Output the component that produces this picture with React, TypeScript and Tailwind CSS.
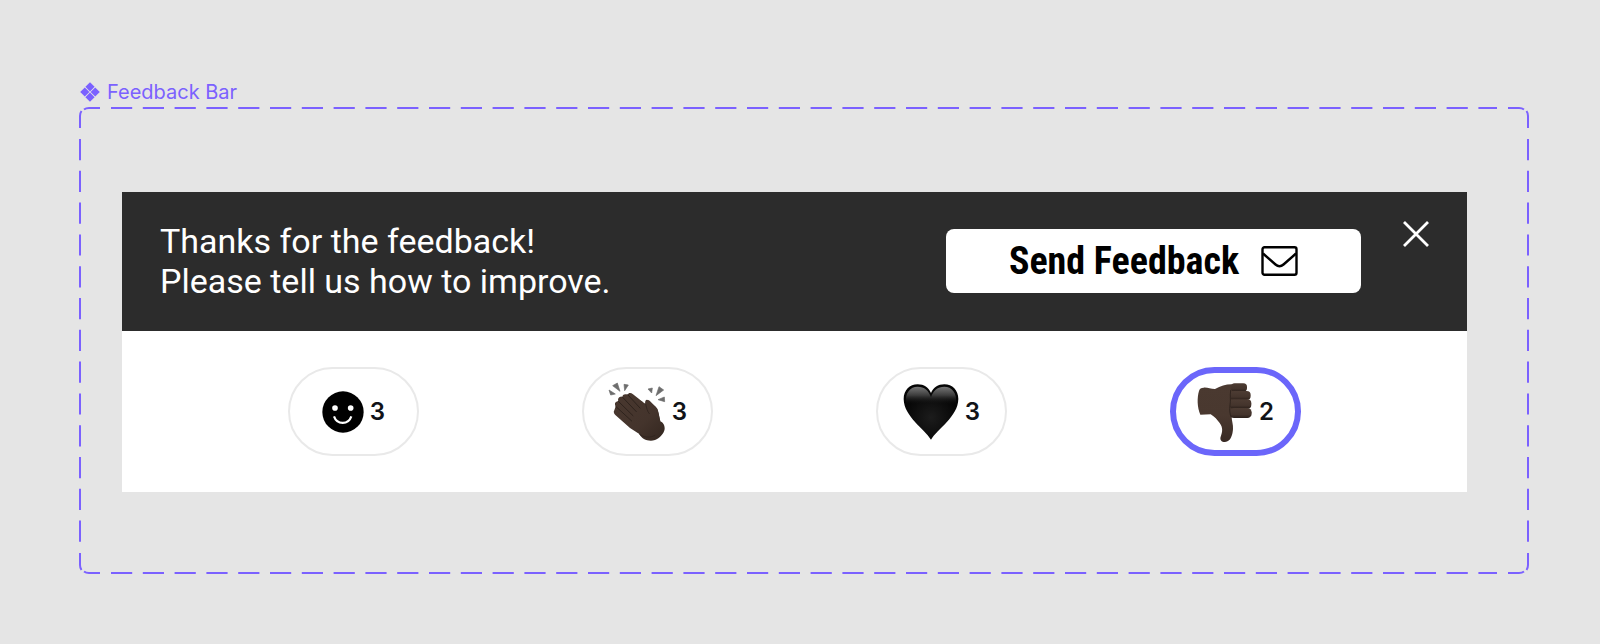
import { useState } from "react";
import type { ReactNode } from "react";

type Reaction = {
  id: string;
  label: string;
  count: number;
  icon: ReactNode;
};

function ComponentIcon() {
  return (
    <svg width="20" height="20" viewBox="0 0 20 20" fill="currentColor" aria-hidden="true">
      <path d="M10 .2 14.6 4.8 10 9.4 5.4 4.8ZM4.8 5.4 9.4 10 4.8 14.6.2 10ZM15.2 5.4 19.8 10 15.2 14.6 10.6 10ZM10 10.6 14.6 15.2 10 19.8 5.4 15.2Z" />
    </svg>
  );
}

function MailIcon() {
  return (
    <svg width="37" height="30" viewBox="0 0 37 30" fill="none" stroke="currentColor" strokeWidth="2.4" aria-hidden="true">
      <rect x="1.5" y="1.2" width="34" height="27.6" rx="2" />
      <path d="M2 7.5 14.5 18.5Q18.5 22 22.5 18.5L35 7.5" />
    </svg>
  );
}

function CloseIcon() {
  return (
    <svg width="26" height="26" viewBox="0 0 26 26" fill="none" stroke="currentColor" strokeWidth="2.8" aria-hidden="true">
      <path d="M1 1 25 25M25 1 1 25" />
    </svg>
  );
}

function SmileIcon() {
  return (
    <svg width="42" height="42" viewBox="129 91 126 126" aria-hidden="true">
      <circle cx="192" cy="154" r="62" fill="#000" />
      <circle cx="168" cy="142" r="8.5" fill="#fff" />
      <circle cx="215" cy="142" r="8.5" fill="#fff" />
      <path d="M165 167C174 193 208 193 217 167" fill="none" stroke="#fff" strokeWidth="6.5" />
    </svg>
  );
}

function ClapIcon() {
  return (
    <svg width="58" height="60" viewBox="115 63 174 180" aria-hidden="true">
      <defs>
        <linearGradient id="clap-skin" x1="0" y1="0" x2="1" y2="1">
          <stop offset="0" stopColor="#49382f" />
          <stop offset="0.6" stopColor="#44342c" />
          <stop offset="1" stopColor="#33261f" />
        </linearGradient>
      </defs>
      <path d="M118 87 123 102 137 99ZM129 74 143 66 151 91ZM163 70 176 72 165 89ZM235 84 248 81 246 96ZM268 77 282 87 259 104ZM284 108 285 122 265 116Z" fill="#6d6d6d" stroke="#6d6d6d" strokeWidth="2" strokeLinejoin="round" />
      <path d="M206 123C210 117 216 119 220 125L227 129C225 118 231 113 237 119L258 137C268 147 268 166 272 181L240 190Z" fill="#3c2d27" />
      <path d="M134 148C131 151 132 157 137 162L181 201 209 219C216 235 238 243 256 237C270 232 283 218 285 204C286 192 279 184 272 181L263 143 240 119C232 113 226 120 228 130L190 100C183 94 176 96 174 101C164 97 158 102 158 108C149 106 143 112 146 121C137 121 133 128 138 136Z" fill="url(#clap-skin)" />
      <path d="M174 101 211 141M158 108 200 152M146 121 190 164M138 136 186 180" fill="none" stroke="#2a1f1a" strokeWidth="2.6" strokeLinecap="round" />
      <path d="M228 129C232 143 232 150 239 158M209 219C222 231 242 231 256 223" fill="none" stroke="#30241e" strokeWidth="2.6" strokeLinecap="round" />
    </svg>
  );
}

function HeartIcon() {
  return (
    <svg width="56" height="58" viewBox="102 69 168 174" aria-hidden="true">
      <defs>
        <linearGradient id="heart-shine" x1="0" y1="0" x2="0" y2="1">
          <stop offset="0" stopColor="#777" />
          <stop offset="0.5" stopColor="#3c3c3c" />
          <stop offset="1" stopColor="#111" stopOpacity="0" />
        </linearGradient>
        <radialGradient id="heart-body" cx="0.5" cy="0.6" r="0.5">
          <stop offset="0" stopColor="#1c1c1c" />
          <stop offset="1" stopColor="#050505" />
        </radialGradient>
      </defs>
      <path d="M186 239C167 207 105 170 104 117C104 91 122 73 146 73C165 73 179 82 186 99C193 82 207 73 226 73C250 73 268 91 268 117C267 170 205 207 186 239Z" fill="url(#heart-body)" />
      <path d="M111 132C107 98 124 80 146 80C166 80 180 92 186 112C192 92 206 80 226 80C248 80 265 98 261 132Z" fill="url(#heart-shine)" />
    </svg>
  );
}

function ThumbsDownIcon() {
  return (
    <svg width="56" height="60" viewBox="117 63 168 180" aria-hidden="true">
      <defs>
        <linearGradient id="thumb-skin" x1="0" y1="0" x2="0" y2="1">
          <stop offset="0" stopColor="#4a3930" />
          <stop offset="0.55" stopColor="#49382f" />
          <stop offset="1" stopColor="#382a24" />
        </linearGradient>
        <linearGradient id="finger-skin" x1="0" y1="0" x2="0" y2="1">
          <stop offset="0" stopColor="#4d3c33" />
          <stop offset="0.65" stopColor="#44342c" />
          <stop offset="1" stopColor="#2a1f1a" />
        </linearGradient>
      </defs>
      <path d="M137 80C149 79 157 84 171 84C189 75 205 69 225 70L240 90V160L221 169C221 179 226 191 225 204C224 220 219 242 201 243C190 243 185 236 188 227C194 212 195 199 185 186C178 177 170 167 158 160L127 161C117 138 117 110 123 90C125 83 129 80 137 80Z" fill="url(#thumb-skin)" />
      <rect x="219" y="67" width="48" height="25" rx="11" fill="url(#finger-skin)" />
      <rect x="216" y="90" width="62" height="27" rx="12" fill="url(#finger-skin)" />
      <rect x="215" y="115" width="65" height="28" rx="12" fill="url(#finger-skin)" />
      <rect x="215" y="141" width="66" height="30" rx="13" fill="url(#finger-skin)" />
      <path d="M218 88C215 105 219 116 216 132C214 147 215 160 220 168" fill="none" stroke="#30241e" strokeWidth="3" strokeLinecap="round" />
    </svg>
  );
}

const reactions: Reaction[] = [
  { id: "smile", label: "Smile", count: 3, icon: <SmileIcon /> },
  { id: "clap", label: "Clap", count: 3, icon: <ClapIcon /> },
  { id: "heart", label: "Love", count: 3, icon: <HeartIcon /> },
  { id: "down", label: "Thumbs down", count: 2, icon: <ThumbsDownIcon /> },
];

// Dashed outline: straight edges plus four rounded corners
function DashedOutline() {
  const edge = { stroke: "currentColor", strokeWidth: 2, strokeDasharray: "21.2 10.6" };
  const corner = (
    <path d="M1 21V9Q1 6 2.5 4M5 2.5Q7 1 10 1H21" fill="none" stroke="currentColor" strokeWidth="2" />
  );

  return (
    <div className="pointer-events-none absolute inset-0 text-[#7b61ff]" aria-hidden="true">
      <div className="absolute inset-x-8 inset-y-0 flex flex-col justify-between">
        <svg className="h-0.5 w-full"><line x1="0" y1="1" x2="100%" y2="1" {...edge} /></svg>
        <svg className="h-0.5 w-full"><line x1="0" y1="1" x2="100%" y2="1" {...edge} /></svg>
      </div>
      <div className="absolute inset-x-0 inset-y-8 flex justify-between">
        <svg className="h-full w-0.5"><line x1="1" y1="0" x2="1" y2="100%" {...edge} /></svg>
        <svg className="h-full w-0.5"><line x1="1" y1="0" x2="1" y2="100%" {...edge} /></svg>
      </div>
      <svg className="absolute left-0 top-0 size-[21px]">{corner}</svg>
      <svg className="absolute right-0 top-0 size-[21px] -scale-x-100">{corner}</svg>
      <svg className="absolute bottom-0 left-0 size-[21px] -scale-y-100">{corner}</svg>
      <svg className="absolute bottom-0 right-0 size-[21px] -scale-100">{corner}</svg>
    </div>
  );
}

function FeedbackBar() {
  const [selected, setSelected] = useState("down");
  const [open, setOpen] = useState(true);

  return (
    <section className="bg-white">
      {open && (
        <header className="flex items-start justify-between bg-[#2c2c2c] pb-[30px] pl-[38px] pr-[38px] pt-[29px]">
          <p className="font-[Roboto,sans-serif] text-[34px] leading-10 text-white">
            Thanks for the feedback!
            <br />
            Please tell us how to improve.
          </p>
          <div className="flex items-start gap-[42px]">
            <button
              type="button"
              className="mt-2 flex h-16 w-[415px] items-center justify-center gap-[22px] rounded-lg bg-white font-['Roboto_Condensed','Liberation_Sans_Narrow',Roboto,sans-serif] text-[38px] font-bold text-black"
            >
              Send Feedback
              <MailIcon />
            </button>
            <button type="button" aria-label="Close" onClick={() => setOpen(false)} className="text-white">
              <CloseIcon />
            </button>
          </div>
        </header>
      )}
      <div className="flex justify-between px-[166px] py-9">
        {reactions.map((r) => (
          <button
            key={r.id}
            type="button"
            aria-label={`${r.label} ${r.count}`}
            aria-pressed={selected === r.id}
            onClick={() => setSelected(r.id)}
            className={`flex h-[89px] w-[131px] items-center justify-center gap-1.5 rounded-full bg-white font-[Inter,sans-serif] text-2xl font-semibold text-[#111318] ${
              selected === r.id ? "border-6 border-[#6b66fa]" : "border-2 border-[#e9e9e9]"
            }`}
          >
            {r.icon}
            <span>{r.count}</span>
          </button>
        ))}
      </div>
    </section>
  );
}

export default function App() {
  return (
    <main className="min-h-screen bg-[#e5e5e5] pb-[70px] pl-[79px] pr-[71px] pt-20">
      <div className="flex h-[27px] items-center gap-[7px] pb-2 pl-px pt-1 font-[Inter,sans-serif] text-xl text-[#7b61ff]">
        <ComponentIcon />
        <h1>Feedback Bar</h1>
      </div>
      <div className="relative pb-[82px] pl-[43px] pr-[62px] pt-[85px]">
        <DashedOutline />
        <FeedbackBar />
      </div>
    </main>
  );
}
